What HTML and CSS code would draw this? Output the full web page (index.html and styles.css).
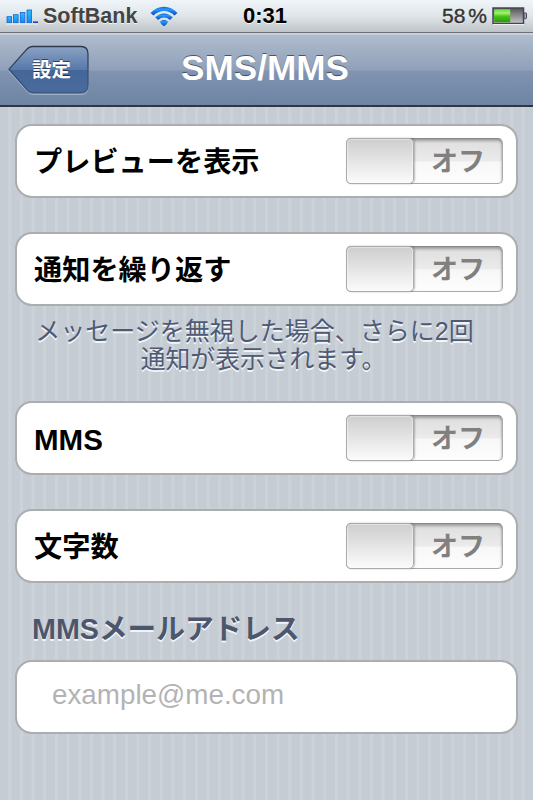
FILE: index.html
```html
<!DOCTYPE html>
<html lang="ja">
<head>
  <meta charset="UTF-8">
  <meta name="viewport" content="width=device-width, initial-scale=1.0">
  <title>SMS/MMS</title>
  <link rel="stylesheet" href="styles.css">
</head>
<body>
  <div class="status-bar">
    <div class="status-left">
      <svg class="signal" width="34" height="18" viewBox="0 0 34 18">
        <defs>
          <linearGradient id="bar" x1="0" y1="0" x2="0" y2="1">
            <stop offset="0" stop-color="#2cc0ff"/>
            <stop offset="1" stop-color="#0c8cf8"/>
          </linearGradient>
        </defs>
        <g fill="url(#bar)" stroke="#1a62d0" stroke-width=".8">
          <rect x="2" y="7.700" width="4.600" height="6"/>
          <rect x="8.500" y="5.700" width="4.600" height="8"/>
          <rect x="15.300" y="3.400" width="4.600" height="10.300"/>
          <rect x="22" y="1" width="4.600" height="12.700"/>
        </g>
        <rect x="28" y="12.400" width="5" height="1.700" fill="#1747c4"/>
        <path d="M1.500 15H33" stroke="#fff" stroke-opacity=".8"/>
      </svg>
      <span class="carrier">SoftBank</span>
      <svg class="wifi" width="28" height="21" viewBox="0 0 28 21">
        <defs>
          <linearGradient id="wave" x1="0" y1="0" x2="0" y2="1">
            <stop offset="0" stop-color="#1a5fd0"/>
            <stop offset=".3" stop-color="#1f9bff"/>
            <stop offset="1" stop-color="#1240c0"/>
          </linearGradient>
        </defs>
        <g fill="url(#wave)">
          <path d="M.5 6.900C8-1.300 20-1.300 27.500 6.900L24.500 9.600C18.500 3.500 9.500 3.500 3.500 9.600Z"/>
          <path d="M5.200 11.300C10.200 6.200 17.800 6.200 22.800 11.300L19.900 14C16.500 10.700 11.500 10.700 8.100 14Z"/>
          <path d="M10 15.500C12.300 13.400 15.700 13.400 18 15.500C17.500 17.500 16 19.200 14 20.300C12 19.200 10.500 17.500 10 15.500Z"/>
        </g>
      </svg>
    </div>
    <span class="clock">0:31</span>
    <div class="status-right">
      <span class="percent">58<span class="percent-sign">%</span></span>
      <svg class="battery" width="36" height="18" viewBox="0 0 36 18">
        <defs>
          <linearGradient id="charge" x1="0" y1="0" x2="0" y2="1">
            <stop offset="0" stop-color="#6ad93a"/>
            <stop offset=".3" stop-color="#a4f26c"/>
            <stop offset=".55" stop-color="#45c51c"/>
            <stop offset="1" stop-color="#2d9a08"/>
          </linearGradient>
          <linearGradient id="empty" x1="0" y1="0" x2="0" y2="1">
            <stop offset="0" stop-color="#555"/>
            <stop offset="1" stop-color="#c8c8c8"/>
          </linearGradient>
        </defs>
        <rect x="1" y="1" width="30.500" height="15.500" fill="url(#empty)" stroke="#42465a" stroke-width="1.500"/>
        <rect x="2.200" y="2.200" width="16" height="13" fill="url(#charge)"/>
        <rect x="32" y="5.800" width="2.500" height="6" rx="1" fill="#aaa" stroke="#42465a"/>
        <path d="M1 17.500H32" stroke="#fff" stroke-opacity=".8"/>
      </svg>
    </div>
  </div>

  <header class="nav-bar">
    <a class="back-button" href="#">
      <svg class="back-shape" width="82" height="52" viewBox="0 0 82 52">
        <defs>
          <linearGradient id="back" x1="0" y1="0" x2="0" y2="1">
            <stop offset="0" stop-color="#8ba2c3"/>
            <stop offset=".52" stop-color="#5577aa"/>
            <stop offset=".52" stop-color="#446699"/>
            <stop offset="1" stop-color="#4a6b9e"/>
          </linearGradient>
          <linearGradient id="edge" x1="0" y1="0" x2="0" y2="1">
            <stop offset="0" stop-color="#303a4b"/>
            <stop offset="1" stop-color="#405a83"/>
          </linearGradient>
        </defs>
        <path d="M25 3.500H73Q80 3.500 80 11V42Q80 49.500 73 49.500H25Q21 49.500 18 45.500L1 26.200L18 7.200Q21 3.500 25 3.500Z" fill="none" stroke="#c6d2e3" stroke-opacity=".5" transform="translate(0 1)"/>
        <path d="M25 2.500H73Q80 2.500 80 10V41Q80 48.500 73 48.500H25Q21 48.500 18 44.500L1 25.200L18 6.200Q21 2.500 25 2.500Z" fill="url(#back)" stroke="url(#edge)" stroke-width="1.300"/>
      </svg>
      <span class="back-label">設定</span>
    </a>
    <h1>SMS/MMS</h1>
  </header>

  <main>
    <section class="cell">
      <span class="label">プレビューを表示</span>
      <div class="switch"><span class="knob"></span><span class="state">オフ</span></div>
    </section>

    <section class="cell">
      <span class="label">通知を繰り返す</span>
      <div class="switch"><span class="knob"></span><span class="state">オフ</span></div>
    </section>
    <p class="note">メッセージを無視した場合、さらに2回<br><span class="note-end">通知が表示されます。</span></p>

    <section class="cell">
      <span class="label latin">MMS</span>
      <div class="switch"><span class="knob"></span><span class="state">オフ</span></div>
    </section>

    <section class="cell">
      <span class="label">文字数</span>
      <div class="switch"><span class="knob"></span><span class="state">オフ</span></div>
    </section>

    <h2>MMSメールアドレス</h2>
    <section class="cell">
      <span class="placeholder">example@me.com</span>
    </section>
  </main>
</body>
</html>
```
FILE: styles.css
```css
* {
  box-sizing: border-box;
}

body {
  margin: 0;
  height: 800px;
  overflow: hidden;
  font-family: "Liberation Sans", "Noto Sans CJK JP", sans-serif;
  background: repeating-linear-gradient(90deg, #c5ccd4 0, #c5ccd4 7.8px, #cbd2d8 8.6px, #cbd2d8 10.8px, #c5ccd4 11.667px);
}

.status-bar {
  display: grid;
  grid-template-columns: 1fr auto 1fr;
  align-items: center;
  height: 33px;
  padding: 0 5px;
  background: linear-gradient(#eff5f8, #dfe5e8 50%, #bdc3c6);
  border-bottom: 1px solid #6c7177;
  font-size: 21.5px;
  line-height: 32px;
  text-shadow: 0 1px 0 rgba(255, 255, 255, 0.7);
}

.status-left,
.status-right {
  display: flex;
  align-items: center;
}

.status-right {
  justify-content: flex-end;
}

.signal {
  margin-top: 4px;
}

.carrier {
  margin-left: 4px;
  font-weight: bold;
  color: #444;
}

.wifi {
  margin-left: 13px;
}

.clock {
  margin-right: 3px;
  font-size: 22px;
  font-weight: bold;
  color: #000;
}

.percent {
  color: #333;
  font-size: 21px;
  -webkit-text-stroke: 0.4px #333;
}

.percent-sign {
  margin-left: 3px;
}

.battery {
  margin-left: 5px;
}

.nav-bar {
  display: grid;
  grid-template-columns: 88px 1fr 88px;
  align-items: center;
  height: 74px;
  border-top: 2px solid #c9d0da;
  border-bottom: 2px solid #2d3642;
  background: linear-gradient(#b0bccd, #8fa0b9 50%, #8094b2 52%, #6d84a2);
}

.back-button {
  display: grid;
  align-items: center;
  height: 52px;
  margin-left: 8px;
  color: #fff;
  text-decoration: none;
}

.back-shape,
.back-label {
  grid-area: 1 / 1;
}

.back-label {
  padding-left: 24px;
  font-size: 19.5px;
  font-weight: bold;
  line-height: 50px;
  text-shadow: 0 -1px 0 rgba(0, 0, 0, 0.5);
}

h1 {
  margin: 0 3px 0 0;
  padding-bottom: 4px;
  font-size: 35.2px;
  line-height: 66px;
  text-align: center;
  color: #fff;
  text-shadow: 0 -1.5px 0 rgba(0, 0, 0, 0.5);
}

main {
  padding: 17px 15px 0;
}

.cell {
  display: flex;
  align-items: center;
  justify-content: space-between;
  height: 74px;
  margin-bottom: 34px;
  padding: 0 13px 0 17px;
  background: #fff;
  border: 2px solid #abadae;
  border-radius: 17px;
}

.label {
  padding-top: 3px;
  font-size: 28.2px;
  font-weight: bold;
  line-height: 67px;
  color: #000;
}

.latin {
  font-size: 29.5px;
}

.switch {
  display: flex;
  width: 157px;
  height: 46px;
  border: 1px solid #aaa;
  border-top-color: #888;
  border-radius: 5px;
  background: linear-gradient(#dedede, #ebebeb 50%, #f7f7f7 52%, #fdfdfd);
  box-shadow: inset 0 3px 3px -1px rgba(0, 0, 0, 0.3), inset -2px 0 2px -1px rgba(0, 0, 0, 0.15);
}

.knob {
  width: 68px;
  height: 46px;
  margin: -1px 0 0 -1px;
  border: 1px solid #aaa;
  border-radius: 5px;
  background: linear-gradient(#cecece, #fbfbfb);
  box-shadow: inset 0 0 0 1px rgba(255, 255, 255, 0.4), 1px 0 2px rgba(0, 0, 0, 0.25);
}

.state {
  flex: 1;
  font-size: 27px;
  font-weight: bold;
  line-height: 47px;
  text-align: center;
  color: #808080;
}

.note {
  margin: -23px 0 27px;
  padding-right: 24px;
  font-size: 25px;
  line-height: 28px;
  text-align: center;
  white-space: nowrap;
  color: #4f5b76;
  text-shadow: 0 1.5px 0 rgba(255, 255, 255, 0.8);
}

.note-end {
  padding-left: 18px;
  font-size: 24.8px;
}

h2 {
  margin: -9px 0 12px 17px;
  padding-top: 2px;
  font-size: 28.7px;
  line-height: 38px;
  color: #4c566c;
  text-shadow: 0 2px 0 rgba(255, 255, 255, 0.8);
}

.placeholder {
  padding: 0 0 4px 18px;
  font-size: 27.8px;
  color: #b3b3b3;
}
```
